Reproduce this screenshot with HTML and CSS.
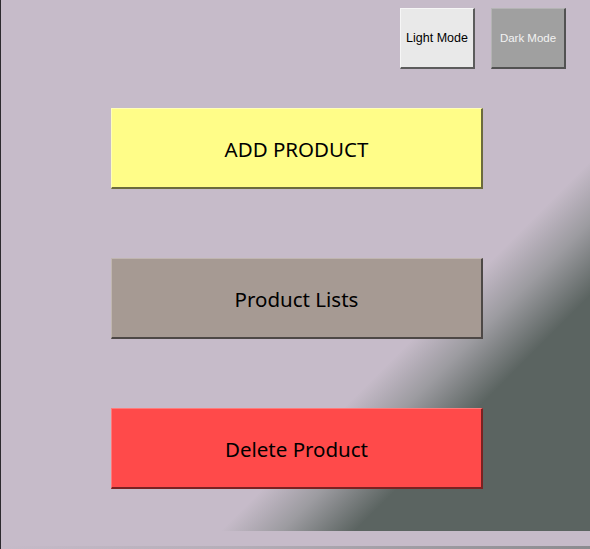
FILE: index.html
```html
<!DOCTYPE html>
<html>
<head>
<meta charset="utf-8">
<link rel="stylesheet" href="styles.css">
</head>
<body>
<div class="window">
  <div class="client">
    <div class="mode-row">
      <button class="mode light">Light Mode</button>
      <button class="mode dark">Dark Mode</button>
    </div>
    <div class="actions">
      <button class="action add">ADD PRODUCT</button>
      <button class="action list">Product Lists</button>
      <button class="action del">Delete Product</button>
    </div>
  </div>
  <div class="footer">
    <div class="footer-line"></div>
  </div>
</div>
</body>
</html>
```
FILE: styles.css
```css
html, body {
  margin: 0;
  padding: 0;
  width: 590px;
  height: 549px;
  overflow: hidden;
  background: #c6bbc9;
}
.window {
  width: 589px;
  height: 549px;
  border-left: 1px solid #2c2a2e;
  display: flex;
  flex-direction: column;
}
.client {
  height: 531px;
  background: linear-gradient(135deg, #c6bbc9 0%, #c6bbc9 67%, #9c9ba0 72.5%, #5b6461 79%, #5b6461 100%);
  display: flex;
  flex-direction: column;
}
.mode-row {
  display: flex;
  justify-content: flex-end;
  gap: 16px;
  padding: 8px 24px 0 0;
}
button {
  margin: 0;
  padding: 0;
  cursor: pointer;
  box-sizing: border-box;
}
.mode {
  width: 75px;
  height: 61px;
  font-family: "Liberation Sans", Arial, sans-serif;
  font-size: 12.5px;
  border-style: solid;
  border-width: 1px 2px 2px 1px;
}
.mode.light {
  background: #e9e9e9;
  color: #000;
  border-color: #f6f6f6 #5c5c5c #5c5c5c #f6f6f6;
}
.mode.dark {
  background: #a0a0a0;
  color: #f2f2f2;
  font-size: 11.5px;
  border-color: #b4b4b4 #525252 #525252 #b4b4b4;
}
.actions {
  display: flex;
  flex-direction: column;
  gap: 69px;
  padding: 39px 0 0 110px;
}
.action {
  width: 372px;
  height: 81px;
  font-family: "Noto Sans", "Open Sans", sans-serif;
  font-size: 20.5px;
  padding-top: 2px;
  color: #000;
  border-style: solid;
  border-width: 1px 2px 2px 1px;
}
.action.add {
  background: #fffd88;
  border-color: #fffeb8 #6b6b3c #6b6b3c #fffeb8;
}
.action.list {
  background: #a69a93;
  border-color: #c0b6b0 #4d4846 #4d4846 #c0b6b0;
}
.action.del {
  background: #ff4a4a;
  border-color: #ff7a7a #7a2222 #7a2222 #ff7a7a;
}
.footer {
  flex: 1;
  background: #c6bbc9;
  display: flex;
  flex-direction: column;
  justify-content: flex-end;
}
.footer-line {
  height: 3px;
  background: linear-gradient(90deg, #c6bbc9 0%, #b5aeb8 40%, #8b8b8f 100%);
}
```
